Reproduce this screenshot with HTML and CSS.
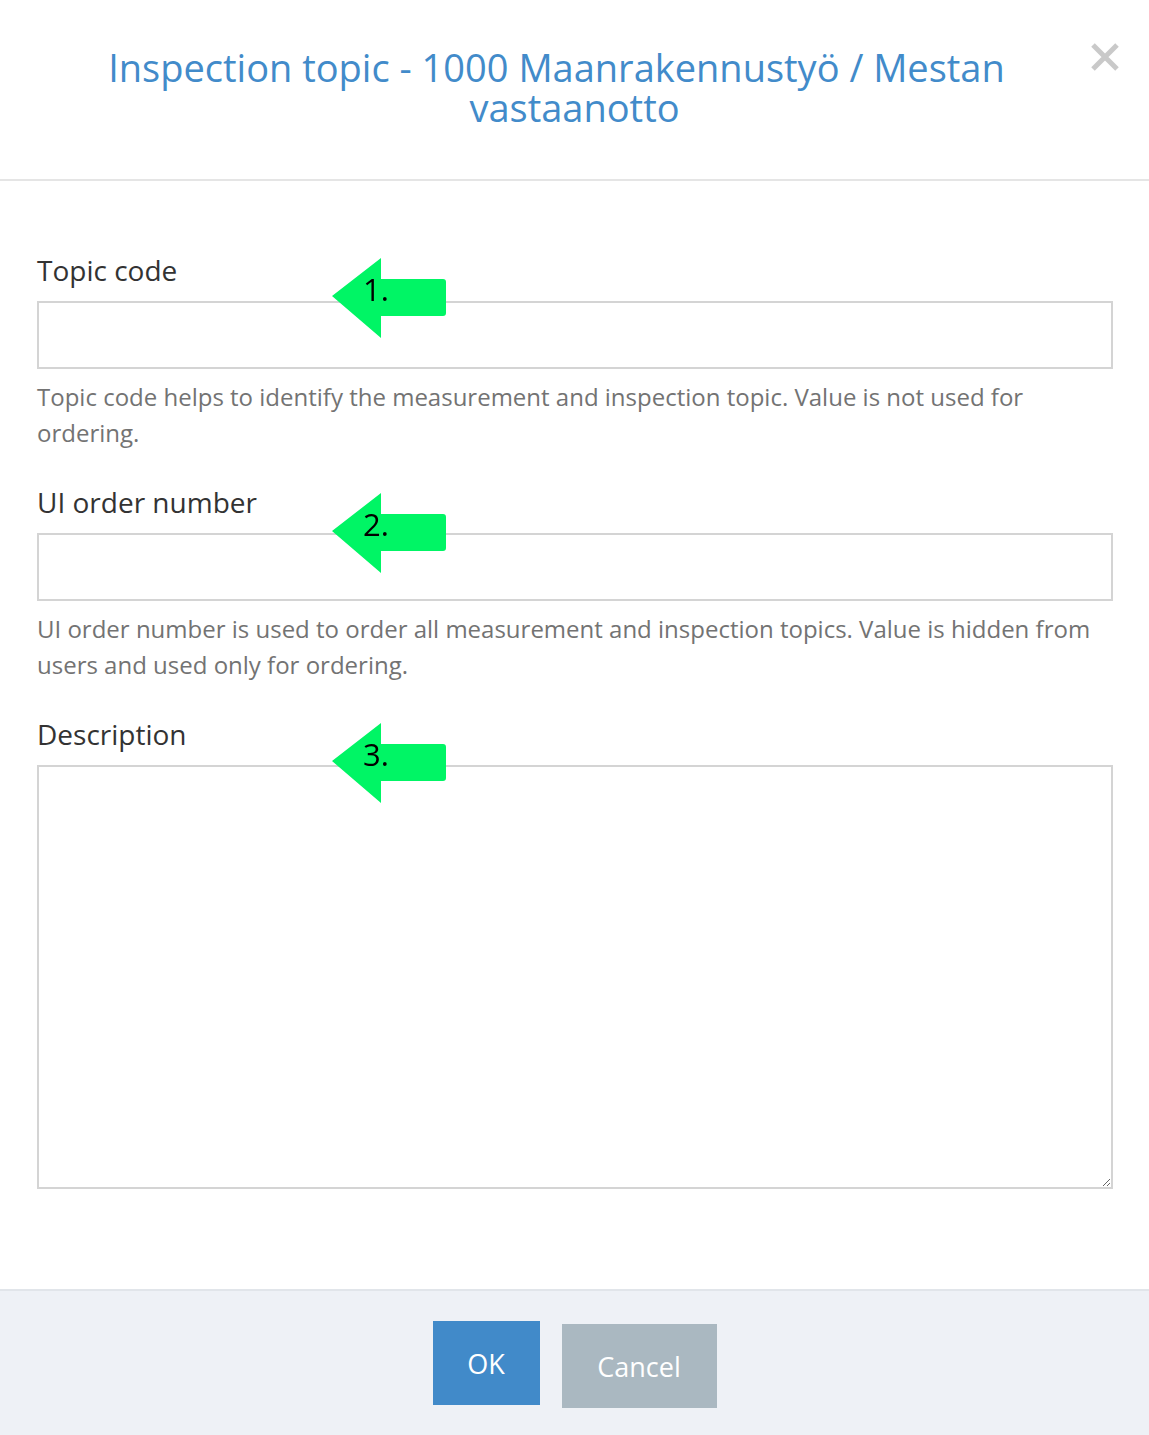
FILE: index.html
```html
<!DOCTYPE html>
<html lang="en">
<head>
    <meta charset="UTF-8">
    <meta name="viewport" content="width=device-width, initial-scale=1.0">
    <title>Inspection topic</title>
    <link rel="stylesheet" href="styles.css">
</head>
<body>
    <div class="modal">
        <div class="modal-header">
            <h4 class="modal-title">Inspection topic - 1000 Maanrakennustyö / Mestan vastaanotto</h4>
            <button class="close" type="button" aria-label="Close">
                <svg width="30" height="30" viewBox="0 0 30 30">
                    <path d="M3 3 L27 27 M27 3 L3 27" stroke="#c9c9c9" stroke-width="5" fill="none"/>
                </svg>
            </button>
        </div>

        <form class="modal-body">
            <div class="form-group">
                <label for="topicCode">Topic code</label>
                <input type="text" id="topicCode">
                <p class="help-block">Topic code helps to identify the measurement and inspection topic. Value is not used for ordering.</p>
                <div class="marker marker-1">
                    <svg width="118" height="82" viewBox="0 0 118 82">
                        <path d="M2 38 L51 0 L51 21 L113 21 Q116 21 116 24 L116 55 Q116 58 113 58 L51 58 L51 80 Z" fill="#00f565"/>
                    </svg>
                    <span>1.</span>
                </div>
            </div>

            <div class="form-group">
                <label for="orderNumber">UI order number</label>
                <input type="text" id="orderNumber">
                <p class="help-block">UI order number is used to order all measurement and inspection topics. Value is hidden from users and used only for ordering.</p>
                <div class="marker marker-2">
                    <svg width="118" height="82" viewBox="0 0 118 82">
                        <path d="M2 38 L51 0 L51 21 L113 21 Q116 21 116 24 L116 55 Q116 58 113 58 L51 58 L51 80 Z" fill="#00f565"/>
                    </svg>
                    <span>2.</span>
                </div>
            </div>

            <div class="form-group">
                <label for="description">Description</label>
                <textarea id="description"></textarea>
                <div class="marker marker-3">
                    <svg width="118" height="82" viewBox="0 0 118 82">
                        <path d="M2 38 L51 0 L51 21 L113 21 Q116 21 116 24 L116 55 Q116 58 113 58 L51 58 L51 80 Z" fill="#00f565"/>
                    </svg>
                    <span>3.</span>
                </div>
            </div>
        </form>

        <div class="modal-footer">
            <button class="btn btn-primary" type="button">OK</button>
            <button class="btn btn-default" type="button">Cancel</button>
        </div>
    </div>
</body>
</html>
```

FILE: styles.css
```css
body {
    margin: 0;
    background: #fff;
    font-family: 'Open Sans', 'Noto Sans', sans-serif;
    color: #333;
}

.modal {
    width: 100%;
    min-height: 100vh;
    display: flex;
    flex-direction: column;
}

.modal-header {
    position: relative;
    padding: 47px 120px 52px;
    border-bottom: 2px solid #e5e5e5;
}

.modal-title {
    margin: 0;
    font-size: 38px;
    line-height: 40px;
    font-weight: normal;
    color: #428bca;
    text-align: center;
    text-indent: -36px;
}

.close {
    position: absolute;
    top: 42px;
    right: 29px;
    padding: 0;
    border: none;
    background: none;
    cursor: pointer;
}

.close svg {
    display: block;
}

.modal-body {
    padding: 73px 36px 100px 37px;
    display: flex;
    flex-direction: column;
    gap: 35px;
}

.form-group {
    position: relative;
}

.form-group label {
    display: block;
    font-size: 28px;
    line-height: 32px;
    margin-bottom: 15px;
    color: #333;
}

.form-group input,
.form-group textarea {
    display: block;
    width: 100%;
    box-sizing: border-box;
    border: 2px solid #d4d4d4;
    background: #fff;
    font-family: inherit;
    font-size: 24px;
    margin: 0;
}

.form-group input {
    height: 68px;
    padding: 0 12px;
}

.form-group textarea {
    height: 424px;
    padding: 12px;
    resize: vertical;
}

.help-block {
    margin: 10px 0 0;
    font-size: 24px;
    line-height: 36px;
    color: #737373;
}

/* green pointer arrows over the fields */
.marker {
    position: absolute;
    left: 293px;
    width: 118px;
    height: 82px;
    filter: blur(0.5px);
}

.marker svg {
    display: block;
}

.marker span {
    position: absolute;
    left: 33px;
    top: 13px;
    font-size: 31px;
    line-height: 36px;
    color: #000;
}

.marker-1 { top: 4px; }
.marker-2 { top: 7px; }
.marker-3 { top: 5px; }

.modal-footer {
    margin-top: auto;
    flex: 1;
    background: #eef1f6;
    border-top: 2px solid #e1e5ea;
    padding-top: 30px;
    display: flex;
    justify-content: center;
    align-items: flex-start;
    gap: 22px;
}

.btn {
    border: none;
    color: #fff;
    font-family: inherit;
    font-size: 27px;
    height: 84px;
    cursor: pointer;
}

.btn-primary {
    width: 107px;
    background: #418ac9;
}

.btn-default {
    width: 155px;
    margin-top: 3px;
    background: #aab8c1;
}
```
